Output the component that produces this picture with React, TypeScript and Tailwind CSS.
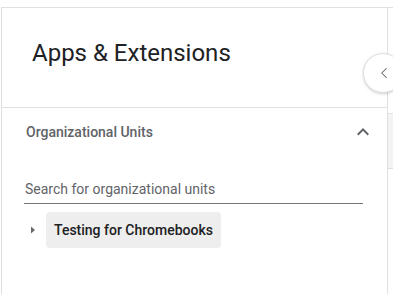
import { ChevronLeft } from 'lucide-react';

function ExpandLess() {
  return (
    <svg width="24" height="24" viewBox="0 0 24 24" className="fill-[#5f6368]">
      <path d="M12 8l-6 6 1.41 1.41L12 10.83l4.59 4.58L18 14z" />
    </svg>
  );
}

function TreeArrow() {
  return (
    <svg width="8" height="10" viewBox="0 0 8 10" className="fill-[#6b6b6b]">
      <polygon points="2,1.5 6,5 2,8.5" />
    </svg>
  );
}

export default function App() {
  return (
    <div className="relative w-[393px] h-[294px] overflow-hidden bg-white font-['Roboto',sans-serif]">
      <div className="ml-[1px] mt-[7px] flex h-[287px] border-t border-[#e0e0e0]">
        {/* side panel */}
        <div className="w-[387px] shrink-0 border-x border-[#e0e0e0]">
          <div className="h-[100px] border-b border-[#e0e0e0] pl-[30px] pt-[29px]">
            <h1 className="text-[24px] leading-[32px] font-normal text-[#202124]">Apps &amp; Extensions</h1>
          </div>

          <div className="flex items-center justify-between pl-[24px] pr-[12px] pt-[12px]">
            <span className="text-[14px] leading-[20px] font-medium text-[#5f6368]">Organizational Units</span>
            <ExpandLess />
          </div>

          <div className="ml-[22px] mr-[24px] mt-[30px] flex h-[30px] items-center border-b border-[#757575] pl-[1px]">
            <input
              className="w-full bg-transparent text-[14px] leading-[20px] text-[#202124] placeholder:text-[#5f6368] outline-none"
              placeholder="Search for organizational units"
            />
          </div>

          <div className="mt-[8px] flex items-center pl-[27px]">
            <TreeArrow />
            <div className="ml-[9px] flex h-[36px] items-center rounded-[4px] bg-[#eeeeee] px-[8px]">
              <span className="text-[14px] leading-[20px] font-medium text-[#202124]">Testing for Chromebooks</span>
            </div>
          </div>
        </div>

        {/* next column, mostly cut off */}
        <div className="flex-1 pt-[105px]">
          <div className="h-[56px] border-y border-[#e0e0e0] bg-[#f3f3f3]" />
        </div>
      </div>

      {/* collapse button */}
      <button className="absolute left-[363px] top-[53px] flex h-[40px] w-[40px] items-center justify-center rounded-full border border-[#e0e0e0] bg-white shadow-[0_1px_3px_rgba(0,0,0,0.18)]">
        <ChevronLeft size={18} strokeWidth={1.4} className="ml-[1px] text-[#5f6368]" />
      </button>
    </div>
  );
}
